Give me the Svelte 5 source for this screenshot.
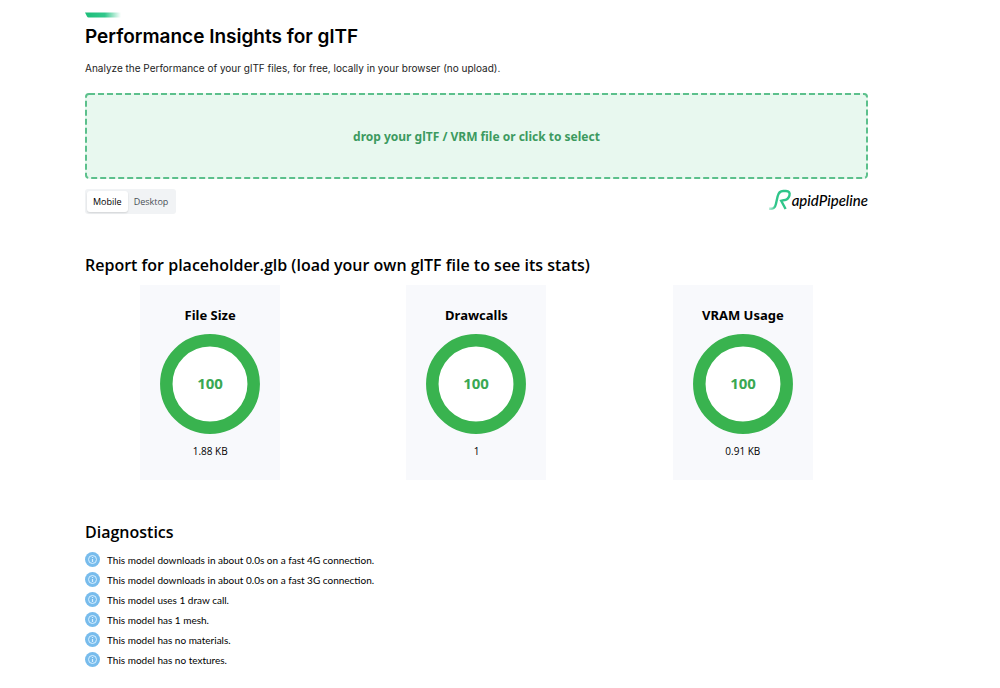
<script>
  let mode = $state('Mobile');
  let picker;
  const modes = ['Mobile', 'Desktop'];
  const scores = [
    { name: 'File Size', score: 100, value: '1.88 KB' },
    { name: 'Drawcalls', score: 100, value: '1' },
    { name: 'VRAM Usage', score: 100, value: '0.91 KB' }
  ];
  const diagnostics = [
    'This model downloads in about 0.0s on a fast 4G connection.',
    'This model downloads in about 0.0s on a fast 3G connection.',
    'This model uses 1 draw call.',
    'This model has 1 mesh.',
    'This model has no materials.',
    'This model has no textures.'
  ];
</script>

<main>
  <header>
    <svg class="accent" width="36" height="6" viewBox="0 0 36 6" aria-hidden="true">
      <defs>
        <linearGradient id="accent-fade">
          <stop offset="0.1" stop-color="#1fbf7c" />
          <stop offset="0.55" stop-color="#32c88c" />
          <stop offset="1" stop-color="#32c88c" stop-opacity="0" />
        </linearGradient>
      </defs>
      <path d="M0 0.5H36V5.5H3.5Q2.5 5.5 2 4.5Z" fill="url(#accent-fade)" />
    </svg>
    <h1>Performance Insights for glTF</h1>
    <p>Analyze the Performance of your glTF files, for free, locally in your browser (no upload).</p>
  </header>

  <button class="drop" onclick={() => picker.click()}>
    <svg class="dashes" aria-hidden="true">
      <rect x="1" y="1" rx="3" />
    </svg>
    drop your glTF / VRM file or click to select
  </button>
  <input bind:this={picker} type="file" accept=".glb,.gltf,.vrm" hidden />

  <div class="toolbar">
    <div class="modes">
      {#each modes as m}
        <button class:active={mode === m} aria-pressed={mode === m} onclick={() => (mode = m)}>{m}</button>
      {/each}
    </div>
    <div class="brand">
      <svg width="24" height="22" viewBox="0 0 24 22" fill="none" aria-hidden="true">
        <defs>
          <linearGradient id="brand-fade">
            <stop offset="0" stop-color="#2fc58a" stop-opacity="0.3" />
            <stop offset="0.3" stop-color="#2fc58a" />
          </linearGradient>
        </defs>
        <path d="M1 19.8H3C6 19.8 7.2 18 7.9 15L9.6 7.5C10.5 3.6 12.2 2 15.2 2H18C21 2 22.2 3.8 21.4 6.6C20.6 9.4 18.6 11 15.6 11.2L13.2 11.8L17.6 20" stroke="url(#brand-fade)" stroke-width="2.4" />
      </svg>
      <span>apidPipeline</span>
    </div>
  </div>

  <section class="report">
    <h2>Report for placeholder.glb (load your own glTF file to see its stats)</h2>
    <div class="cards">
      {#each scores as s}
        <article>
          <h3>{s.name}</h3>
          <svg width="100" height="100" viewBox="0 0 100 100" role="img" aria-label={s.name}>
            <circle cx="50" cy="50" r="43.7" fill="#fff" stroke="#39b34f" stroke-width="12.5" />
            <text x="50" y="55" text-anchor="middle">{s.score}</text>
          </svg>
          <p>{s.value}</p>
        </article>
      {/each}
    </div>
  </section>

  <section class="diagnostics">
    <h2>Diagnostics</h2>
    <ul>
      {#each diagnostics as d}
        <li>
          <svg width="15" height="15" viewBox="0 0 15 15" fill="none" aria-hidden="true">
            <circle cx="7.5" cy="7.5" r="7.5" fill="#78bcec" />
            <circle cx="7.5" cy="7.5" r="4" stroke="#d9f0ff" />
            <path d="M7.5 5V6M7.5 7V10" stroke="#d9f0ff" stroke-width="1.2" />
          </svg>
          <span>{d}</span>
        </li>
      {/each}
    </ul>
  </section>
</main>

<style>
  :global(body) {
    background: #fff;
  }
  main {
    padding: 12px 132px 16px 85px;
    font-family: "Open Sans", "Noto Sans", sans-serif;
    font-size: 10px;
    color: #000;
  }
  h1, h2, h3, p, ul {
    margin: 0;
    padding: 0;
  }
  button {
    font: inherit;
    cursor: pointer;
  }
  header {
    font-family: Inter, sans-serif;
  }
  .accent {
    display: block;
  }
  h1 {
    margin-top: 4px;
    font-size: 19px;
    font-weight: 600;
    line-height: 30px;
  }
  header p {
    margin-top: 8px;
    font-size: 10px;
    line-height: 16px;
    color: #222;
  }
  .drop {
    position: relative;
    display: block;
    width: 100%;
    height: 86px;
    margin-top: 17px;
    padding: 0;
    border: 0;
    border-radius: 4px;
    background: #e8f8ef;
    color: #3c9a5f;
    font-family: "Noto Sans", sans-serif;
    font-size: 12px;
    font-weight: 700;
  }
  .dashes {
    position: absolute;
    inset: 0;
    width: 100%;
    height: 100%;
  }
  .dashes rect {
    width: calc(100% - 2px);
    height: calc(100% - 2px);
    fill: none;
    stroke: #5cc08c;
    stroke-width: 2;
    stroke-dasharray: 6 3;
  }
  .toolbar {
    display: flex;
    justify-content: space-between;
    align-items: center;
    margin-top: 10px;
  }
  .modes {
    display: flex;
    padding: 2px;
    border-radius: 3px;
    background: #f1f3f5;
  }
  .modes button {
    padding: 0 6px;
    border: 0;
    border-radius: 3px;
    background: transparent;
    color: #495057;
    font-size: 9px;
    line-height: 21px;
  }
  .modes .active {
    background: #fff;
    color: #000;
    font-weight: 500;
    box-shadow: 0 1px 2px #0002;
  }
  .brand {
    display: flex;
    align-items: center;
    margin-top: -4px;
    font-family: Lato, sans-serif;
    font-size: 15px;
    font-style: italic;
    font-weight: 500;
    line-height: 18px;
  }
  h2 {
    font-size: 16px;
    font-weight: 600;
    line-height: 24px;
  }
  .report {
    margin-top: 39px;
  }
  .cards {
    display: grid;
    grid-template-columns: repeat(3, 1fr);
    gap: 16px;
    justify-items: center;
    margin-top: 8px;
  }
  article {
    display: flex;
    flex-direction: column;
    align-items: center;
    padding: 20px;
    background: #f8f9fc;
  }
  h3 {
    font-family: "Noto Sans", sans-serif;
    font-size: 13px;
    font-weight: 700;
    line-height: 20px;
    white-space: nowrap;
  }
  article svg {
    margin: 9px 0;
  }
  article text {
    fill: #39a852;
    font-family: "Noto Sans", sans-serif;
    font-size: 15px;
    font-weight: 700;
  }
  article p {
    line-height: 17px;
  }
  .diagnostics {
    margin-top: 40px;
  }
  ul {
    margin-top: 6px;
    list-style: none;
  }
  li {
    display: flex;
    gap: 7px;
    font-family: Lato, sans-serif;
    line-height: 20px;
  }
  li svg {
    margin-top: 2px;
  }
</style>
